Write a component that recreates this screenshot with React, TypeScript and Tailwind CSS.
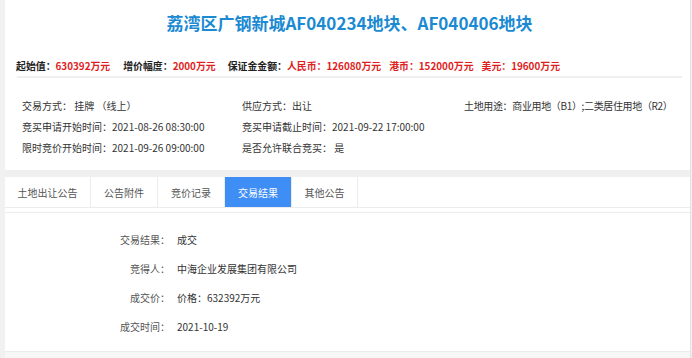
import React from "react";

const font = { fontFamily: '"Noto Sans CJK SC", "Noto Sans", sans-serif' };

function Info() {
  return (
    <div className="flex items-center h-[20px] ml-[11px] text-[9.9px] font-bold leading-[20px] whitespace-nowrap">
      <span className="text-[#222]">起始值：</span>
      <span className="text-[#e01e1e]">630392万元</span>
      <span className="ml-[13px] text-[#222]">增价幅度：</span>
      <span className="text-[#e01e1e]">2000万元</span>
      <span className="ml-[12px] text-[#222]">保证金金额：</span>
      <span className="text-[#e01e1e]">人民币：126080万元</span>
      <span className="ml-[8px] text-[#e01e1e]">港币：152000万元</span>
      <span className="ml-[8px] text-[#e01e1e]">美元：19600万元</span>
    </div>
  );
}

const tabs = [
  { t: "土地出让公告", w: "w-[86px]" },
  { t: "公告附件", w: "w-[67px]" },
  { t: "竞价记录", w: "w-[67px]" },
  { t: "交易结果", w: "w-[67px]", active: true },
  { t: "其他公告", w: "w-[66px]" },
];

const results = [
  ["交易结果：", "成交"],
  ["竞得人：", "中海企业发展集团有限公司"],
  ["成交价：", "价格：632392万元"],
  ["成交时间：", "2021-10-19"],
];

export default function App() {
  return (
    <div
      className="w-[692px] h-[358px] overflow-hidden bg-[#f1f1f1] pl-[5px]"
      style={font}
    >
      <div className="w-[686px] h-full border-r border-[#e2e2e2] flex flex-col">
        <div className="bg-white">
          <div className="h-[44px] flex items-center justify-center text-[17px] font-bold text-[#1b8ad3] leading-none pl-[4px]">
            荔湾区广钢新城AF040234地块、AF040406地块
          </div>
          <div className="h-[12px]" />
          <Info />
          <div className="ml-[12px] mr-[8px] border-b-2 border-[#f0f0f0]" />
          <div className="pt-[17px] pb-[12px] pl-[17px] grid grid-cols-[220px_222px_1fr] text-[10px] leading-[21px] text-[#333] whitespace-nowrap">
            <div>交易方式：&nbsp;挂牌&nbsp;（线上）</div>
            <div>供应方式：出让</div>
            <div className="tracking-[-0.35px]">土地用途：商业用地（B1）;二类居住用地（R2）</div>
            <div>竞买申请开始时间：2021-08-26 08:30:00</div>
            <div>竞买申请截止时间：2021-09-22 17:00:00</div>
            <div></div>
            <div>限时竞价开始时间：2021-09-26 09:00:00</div>
            <div>是否允许联合竞买：&nbsp;是</div>
            <div></div>
          </div>
        </div>
        <div className="h-[7px] bg-[#f0f0f0]" />
        <div className="h-[31px] bg-white border-b border-[#ececec] flex">
          {tabs.map((tab) => (
            <div
              key={tab.t}
              className={
                tab.w +
                " h-full flex items-center justify-center text-[10px] border-r border-[#ececec] " +
                (tab.active ? "bg-[#3f8ef6] text-white" : "text-[#555]")
              }
            >
              {tab.t}
            </div>
          ))}
        </div>
        <div className="h-[4px] bg-white" />
        <div className="bg-white border-t border-b border-[#ececec] h-[140px] pt-[12px]">
          {results.map(([k, v]) => (
            <div key={k} className="h-[29px] flex items-center text-[10px]">
              <div className="w-[165px] text-right text-[#555]">{k}</div>
              <div className="ml-[7px] text-[#333]">{v}</div>
            </div>
          ))}
        </div>
        <div className="flex-1 bg-[#f7f7f7]" />
      </div>
    </div>
  );
}
